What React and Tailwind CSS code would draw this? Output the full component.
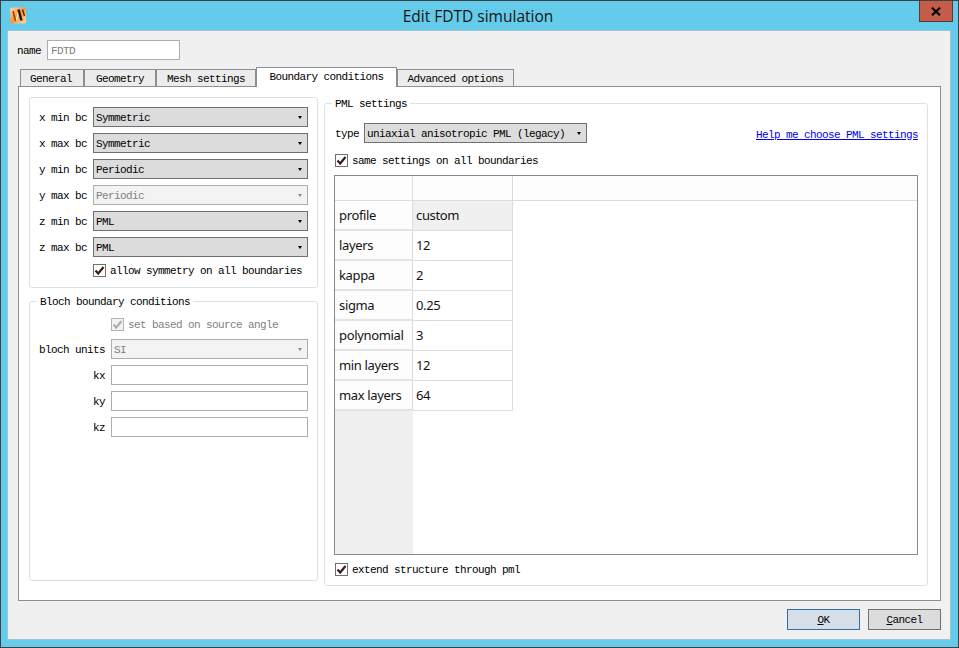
const mono = "font-['Liberation_Mono',monospace] text-[11px] leading-[13px] tracking-[-0.6px] text-black";

function Check({ disabled }) {
  return (
    <span className={`w-[13px] h-[13px] shrink-0 border flex items-center justify-center ${disabled ? "border-[#b5b5b5] bg-[#f3f3f3]" : "border-[#707070] bg-white"}`}>
      <svg width="11" height="11" viewBox="0 0 11 11">
        <path d="M1.5 5.5 L4.2 8.5 L9.5 2" fill="none" stroke={disabled ? "#b0b0b0" : "#3a1c1c"} strokeWidth="2.2" />
      </svg>
    </span>
  );
}

function CheckRow({ label, disabled, className = "" }) {
  return (
    <div className={`h-[13px] flex items-center gap-[4px] ${className}`}>
      <Check disabled={disabled} />
      <span className={`pt-[2px] ${disabled ? "text-[#7f7f7f]" : ""}`}>{label}</span>
    </div>
  );
}

function Combo({ value, disabled, className = "w-[215px]" }) {
  return (
    <div className={`h-[20px] border flex items-center pl-[2px] pr-[5px] justify-between ${className} ${disabled ? "bg-[#f3f3f3] border-[#adadad] text-[#808080]" : "bg-[#dcdcdc] border-[#707070]"}`}>
      <span className="pt-[2px]">{value}</span>
      <span className={`w-0 h-0 border-x-[2.5px] border-x-transparent border-t-[3px] ${disabled ? "border-t-[#8a8a8a]" : "border-t-black"}`} />
    </div>
  );
}

function Row({ label, children }) {
  return (
    <div className="flex items-center justify-end gap-[6px]">
      <span className="pt-[2px]">{label}</span>
      {children}
    </div>
  );
}

function Input({ className = "" }) {
  return <div className={`h-[20px] border border-[#adadad] bg-white ${className}`} />;
}

function Tab({ label, active, className }) {
  return active ? (
    <div className={`h-[20px] -mb-[1px] relative bg-white border border-b-0 border-[#8a8f96] flex justify-center items-center ${className}`}>{label}</div>
  ) : (
    <div className={`h-[17px] bg-[#ececec] border border-b-0 border-[#8a8f96] flex justify-center items-center pt-[2px] ${className}`}>{label}</div>
  );
}

const rows = [
  ["profile", "custom"],
  ["layers", "12"],
  ["kappa", "2"],
  ["sigma", "0.25"],
  ["polynomial", "3"],
  ["min layers", "12"],
  ["max layers", "64"],
];

function PmlTable() {
  return (
    <div className="h-[380px] w-[584px] border border-[#85888c] bg-white flex flex-col font-['Noto_Sans',sans-serif] text-[13px] tracking-[-0.35px] text-[#141414]">
      <div className="h-[25px] shrink-0 flex border-b border-[#dcdcdc] bg-[#fdfdfd]">
        <div className="w-[78px] border-r border-[#dcdcdc]" />
        <div className="w-[100px] border-r border-[#dcdcdc]" />
      </div>
      {rows.map(([k, v], i) => (
        <div key={k} className="h-[30px] shrink-0 flex">
          <div className="w-[78px] bg-[#fdfdfd] border-r border-b-2 border-r-[#dcdcdc] border-b-[#e4e4e4] pl-[4px] flex items-center">{k}</div>
          <div className={`w-[100px] border-r border-b border-[#dcdcdc] pl-[3px] flex items-center ${i === 0 ? "bg-[#f0f0f0]" : ""}`}>{v}</div>
        </div>
      ))}
      <div className="flex-1 w-[78px] bg-[#f0f0f0]" />
    </div>
  );
}

export default function App() {
  return (
    <div className={`relative w-[959px] h-[648px] overflow-hidden bg-[#65cbea] border-t border-l border-b border-r border-[#3c4043] flex flex-col ${mono}`}>
      <div className="h-[29px] shrink-0 flex items-center pl-[9px] pb-[1px]">
        <svg width="16" height="17" viewBox="0 0 16 17" className="shrink-0">
          <defs>
            <linearGradient id="g" x1="0" y1="0" x2="1" y2="1">
              <stop offset="0" stopColor="#ffd9a8" />
              <stop offset="0.5" stopColor="#f5973f" />
              <stop offset="1" stopColor="#ffe2b8" />
            </linearGradient>
          </defs>
          <rect x="0" y="0.5" width="16" height="16" rx="2.5" fill="url(#g)" />
          <path d="M3 4 L5.5 14" stroke="#8a3a0c" strokeWidth="1.4" fill="none" />
          <path d="M6.5 13 L8.5 5" stroke="#fff0d0" strokeWidth="1.4" fill="none" />
          <path d="M8.5 2.5 L11.5 13.5" stroke="#2b1206" strokeWidth="2.4" fill="none" />
          <path d="M12.5 2.5 L14.5 9" stroke="#5a2406" strokeWidth="1.4" fill="none" />
        </svg>
        <div className="flex-1 text-center pr-[28px] pt-[1px] font-['Open_Sans',sans-serif] text-[15.5px] leading-[20px] tracking-normal text-[#141414]">Edit FDTD simulation</div>
      </div>
      <div className="absolute top-[-1px] left-[918px] w-[34px] h-[22px] bg-[#c55c49] border border-[#5b3a35] flex items-center justify-center">
        <svg width="10" height="9" viewBox="0 0 10 9">
          <path d="M1 0.8 L9 8.2 M9 0.8 L1 8.2" stroke="#000" strokeWidth="2.2" fill="none" />
        </svg>
      </div>

      <div className="ml-[6px] mr-[7px] h-[610px] border border-[#9cc3d8] bg-[#f0f0f0] flex flex-col">
        <div className="mt-[9px] ml-[9px] flex items-center gap-[6px] h-[20px]">
          <span className="pt-[2px]">name</span>
          <div className="w-[133px] h-[20px] border border-[#adadad] bg-white pl-[3px] pt-[2px] flex items-center text-[#808080]">FDTD</div>
        </div>

        <div className="mt-[7px] ml-[12px] h-[19px] flex items-end relative">
          <Tab label="General" className="w-[64px] pr-[2px]" />
          <Tab label="Geometry" className="w-[72px]" />
          <Tab label="Mesh settings" className="w-[100px]" />
          <Tab label="Boundary conditions" active className="w-[141px]" />
          <Tab label="Advanced options" className="w-[117px]" />
        </div>

        <div className="ml-[10px] mr-[9px] h-[515px] border border-[#8a8f96] bg-white flex gap-[6px] pl-[10px] pt-[10px]">
          <div className="w-[289px] flex flex-col">
            <div className="h-[191px] border border-[#d9e2ea] rounded-[3px] pt-[9px] pr-[9px] flex flex-col gap-[6px]">
              <Row label="x min bc"><Combo value="Symmetric" /></Row>
              <Row label="x max bc"><Combo value="Symmetric" /></Row>
              <Row label="y min bc"><Combo value="Periodic" /></Row>
              <Row label="y max bc"><Combo value="Periodic" disabled /></Row>
              <Row label="z min bc"><Combo value="PML" /></Row>
              <Row label="z max bc"><Combo value="PML" /></Row>
              <CheckRow label="allow symmetry on all boundaries" className="ml-[63px] mt-[1px]" />
            </div>
            <fieldset className="mt-[7px] h-[286px] border border-[#d9e2ea] rounded-[3px] pr-[9px]">
              <legend className="ml-[7px] px-[3px] h-[12px] leading-[14px]">Bloch boundary conditions</legend>
              <div className="pt-[11px] flex flex-col gap-[6px]">
                <CheckRow label="set based on source angle" disabled className="ml-[81px] mb-[2px]" />
                <Row label="bloch units"><Combo value="SI" disabled className="w-[197px]" /></Row>
                <Row label="kx"><Input className="w-[197px]" /></Row>
                <Row label="ky"><Input className="w-[197px]" /></Row>
                <Row label="kz"><Input className="w-[197px]" /></Row>
              </div>
            </fieldset>
          </div>

          <fieldset className="w-[604px] h-[489px] border border-[#d9e2ea] rounded-[3px] pl-[9px] pr-[9px]">
            <legend className="ml-[-2px] px-[3px] h-[12px] leading-[14px]">PML settings</legend>
            <div className="pt-[14px] flex flex-col">
              <div className="flex items-center w-[584px] h-[20px]">
                <span className="mr-[5px] ml-[1px] pt-[2px]">type</span>
                <Combo value="uniaxial anisotropic PML (legacy)" className="w-[223px]" />
                <a className="ml-auto mt-[4px] text-[#0000ff] underline">Help me choose PML settings</a>
              </div>
              <CheckRow label="same settings on all boundaries" className="mt-[11px] ml-[1px]" />
              <div className="mt-[8px]"><PmlTable /></div>
              <CheckRow label="extend structure through pml" className="mt-[8px] ml-[1px]" />
            </div>
          </fieldset>
        </div>

        <div className="mt-[8px] mr-[9px] flex justify-end gap-[8px]">
          <button className="w-[73px] h-[21px] bg-[#d6dfe8] border border-[#2f6fa5] flex items-center justify-center"><span className="pt-[2px]"><u>O</u>K</span></button>
          <button className="w-[73px] h-[21px] bg-[#dcdcdc] border border-[#707070] flex items-center justify-center"><span className="pt-[2px]"><u>C</u>ancel</span></button>
        </div>
      </div>
    </div>
  );
}
